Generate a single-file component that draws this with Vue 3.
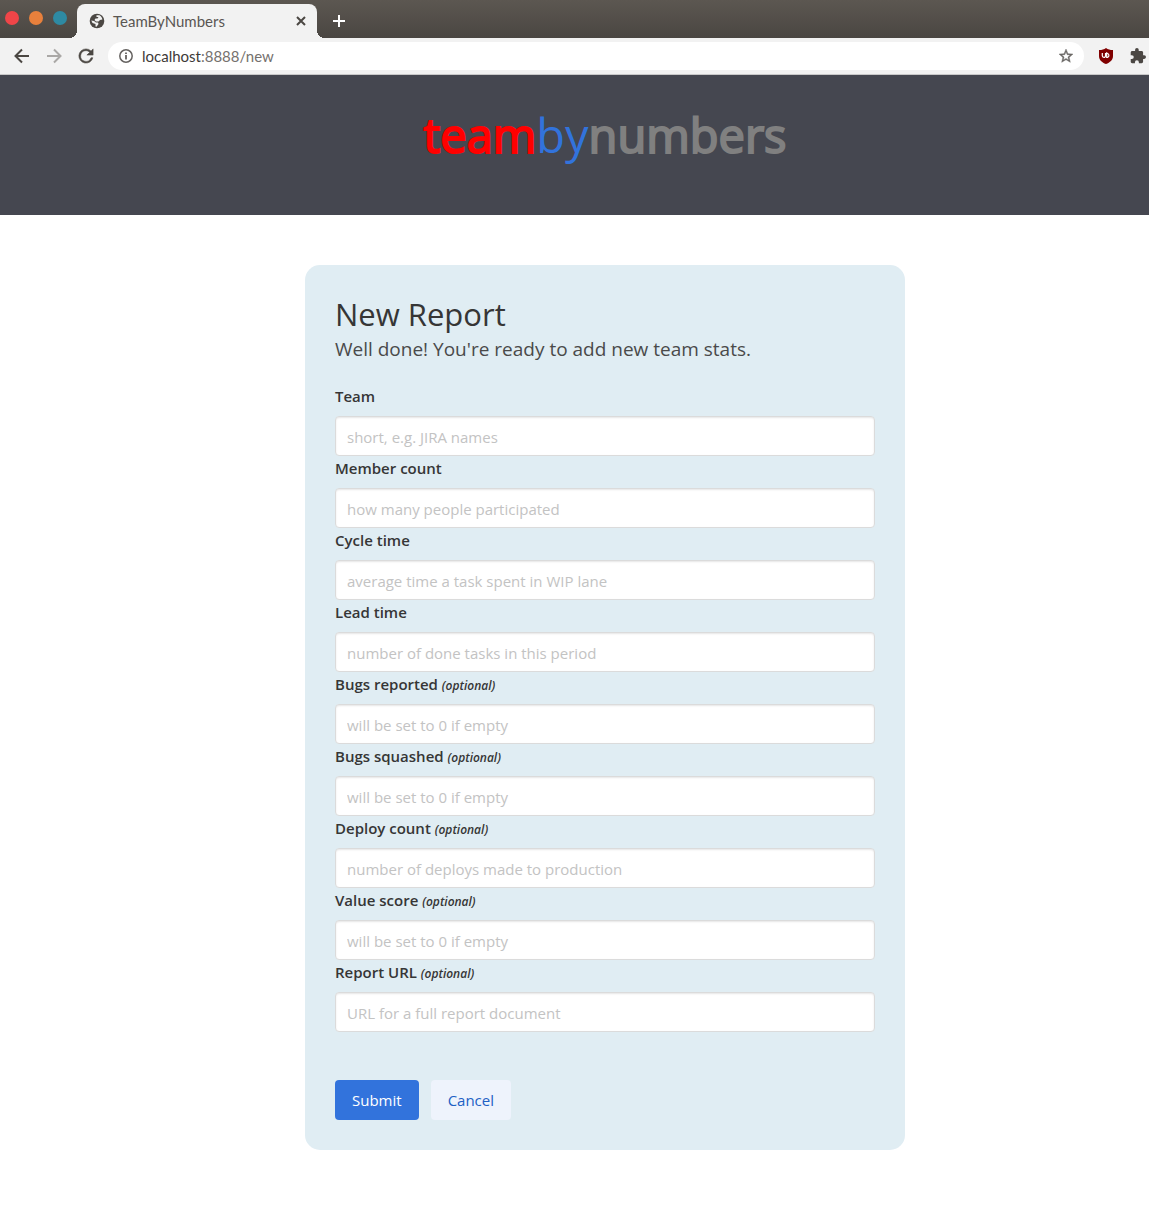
<script setup>
const fields = [
  { id: 'team', label: 'Team', placeholder: 'short, e.g. JIRA names' },
  { id: 'members', label: 'Member count', placeholder: 'how many people participated' },
  { id: 'cycle', label: 'Cycle time', placeholder: 'average time a task spent in WIP lane' },
  { id: 'lead', label: 'Lead time', placeholder: 'number of done tasks in this period' },
  { id: 'reported', label: 'Bugs reported', optional: true, placeholder: 'will be set to 0 if empty' },
  { id: 'squashed', label: 'Bugs squashed', optional: true, placeholder: 'will be set to 0 if empty' },
  { id: 'deploys', label: 'Deploy count', optional: true, placeholder: 'number of deploys made to production' },
  { id: 'score', label: 'Value score', optional: true, placeholder: 'will be set to 0 if empty' },
  { id: 'url', label: 'Report URL', optional: true, placeholder: 'URL for a full report document' },
]
</script>

<template>
  <div class="window">
    <header class="tabstrip">
      <div class="lights">
        <button class="light close" aria-label="Close window"></button>
        <button class="light minimise" aria-label="Minimise window"></button>
        <button class="light maximise" aria-label="Maximise window"></button>
      </div>
      <div class="tab">
        <svg viewBox="0 0 18 18" width="18" height="18">
          <circle cx="9" cy="9" r="7.300" fill="#4b4743" />
          <path fill="#f2f2f2" d="M8.500 3.300h3c1.500.900 2.500 2.300 2.900 4.200l-2.400.500-1.500 1.500H8L6.500 8l1-1.500h2L10.500 5h-2zM3.300 8.500l2.700.500 2 1.500h2l.5 1.500-2 2.700-1-.200V12L4.500 11z" />
        </svg>
        <span class="tab-title">TeamByNumbers</span>
        <button class="icon" aria-label="Close tab">
          <svg viewBox="0 0 10 10" width="10" height="10"><path d="M1 1l8 8M9 1L1 9" stroke="#4b4743" stroke-width="2" /></svg>
        </button>
      </div>
      <button class="icon new-tab" aria-label="New tab">
        <svg viewBox="0 0 12 12" width="12" height="12"><path d="M6 0v12M0 6h12" stroke="#fff" stroke-width="2" /></svg>
      </button>
    </header>

    <nav class="toolbar">
      <button class="icon" aria-label="Back">
        <svg viewBox="0 0 16 16" width="16" height="16"><path d="M15 8H2M8 1.500L1.500 8 8 14.500" fill="none" stroke="#4b4743" stroke-width="2" /></svg>
      </button>
      <button class="icon" aria-label="Forward">
        <svg viewBox="0 0 16 16" width="16" height="16"><path d="M1 8h13M8 1.500L14.500 8 8 14.500" fill="none" stroke="#aaa8a6" stroke-width="2" /></svg>
      </button>
      <button class="icon" aria-label="Reload">
        <svg viewBox="3 3 18 18" width="16" height="16"><path fill="#4b4743" stroke="#4b4743" stroke-width=".6" d="M17.650 6.350A7.960 7.960 0 0 0 12 4a8 8 0 1 0 7.730 10h-2.080A6 6 0 1 1 12 6c1.660 0 3.140.690 4.220 1.780L13 11h7V4z" /></svg>
      </button>
      <div class="address">
        <svg viewBox="0 0 14 14" width="14" height="14"><circle cx="7" cy="7" r="6.200" fill="none" stroke="#656260" stroke-width="1.500" /><path d="M7 6v4.500M7 3.500V5" stroke="#656260" stroke-width="1.800" /></svg>
        <span class="url"><span class="host">localhost</span>:8888/new</span>
        <button class="icon" aria-label="Bookmark this page">
          <svg viewBox="2 2 20 20" width="14" height="14"><path fill="#6b6866" stroke="#6b6866" stroke-width=".6" d="M22 9.240l-7.190-.620L12 2 9.190 8.630 2 9.240l5.460 4.730L5.820 21 12 17.270 18.180 21l-1.630-7.030L22 9.240zM12 15.400l-3.760 2.270 1-4.280-3.320-2.880 4.380-.380L12 6.100l1.710 4.040 4.380.380-3.320 2.880 1 4.280L12 15.400z" /></svg>
        </button>
      </div>
      <button class="icon" aria-label="uBlock Origin">
        <svg viewBox="-1 0 16 16" width="16" height="16">
          <path fill="#800000" d="M7 0c2 1.500 4 2 7 2v6c0 4-3 6.500-7 8-4-1.500-7-4-7-8V2c3 0 5-.500 7-2z" />
          <path d="M3.300 5v2.800c0 2 3.200 2 3.200 0V5M7.700 5v4.300h1a2.100 2.100 0 0 0 0-3.800z" fill="none" stroke="#fff" stroke-width="1.200" />
        </svg>
      </button>
      <button class="icon" aria-label="Extensions">
        <svg viewBox="1 1 22 22" width="16" height="16"><path fill="#4b4743" d="M20.500 11H19V7c0-1.100-.900-2-2-2h-4V3.500a2.500 2.500 0 0 0-5 0V5H4c-1.100 0-2 .900-2 2v3.800h1.500a2.700 2.700 0 0 1 0 5.400H2V20c0 1.100.900 2 2 2h3.800v-1.500a2.700 2.700 0 0 1 5.400 0V22H17c1.100 0 2-.900 2-2v-4h1.500a2.500 2.500 0 0 0 0-5z" /></svg>
      </button>
    </nav>

    <div class="banner">
      <div class="brand"><b class="team">team</b><span class="by">by</span><b class="numbers">numbers</b></div>
    </div>

    <main>
      <form class="card" @submit.prevent>
        <h1>New Report</h1>
        <p class="subtitle">Well done! You're ready to add new team stats.</p>
        <div v-for="f in fields" :key="f.id" class="field">
          <label :for="f.id">{{ f.label }} <i v-if="f.optional">(optional)</i></label>
          <input :id="f.id" type="text" :placeholder="f.placeholder" />
        </div>
        <div class="actions">
          <button type="submit" class="btn submit">Submit</button>
          <button type="button" class="btn cancel">Cancel</button>
        </div>
      </form>
    </main>
  </div>
</template>

<style>
body {
  margin: 0;
  background: #fff;
}
</style>

<style scoped>
.window {
  font-family: "Open Sans", "Noto Sans", sans-serif;
  font-size: 15px;
  color: #363636;
  overflow-x: hidden;
}
.window * {
  box-sizing: border-box;
}
button {
  font: inherit;
  border: 0;
  padding: 0;
}
svg {
  display: block;
  flex: none;
}
.icon {
  background: none;
  flex: none;
}
.tabstrip {
  display: flex;
  align-items: flex-end;
  height: 38px;
  padding-left: 5px;
  background: linear-gradient(#5c5751, #4a4642);
}
.lights {
  display: flex;
  gap: 10px;
  width: 72px;
  padding-bottom: 13px;
}
.light {
  width: 14px;
  height: 14px;
  border-radius: 50%;
}
.close { background: #f04548; }
.minimise { background: #e8803c; }
.maximise { background: #2e8aa3; }
.tab {
  position: relative;
  display: flex;
  align-items: center;
  width: 240px;
  height: 34px;
  padding: 0 11px;
  border-radius: 8px 8px 0 0;
  background: #f2f2f2;
}
.tab::before,
.tab::after {
  content: "";
  position: absolute;
  bottom: 0;
  width: 8px;
  height: 8px;
}
.tab::before {
  right: 100%;
  background: radial-gradient(circle at 0 0, transparent 8px, #f2f2f2 8px);
}
.tab::after {
  left: 100%;
  background: radial-gradient(circle at 100% 0, transparent 8px, #f2f2f2 8px);
}
.tab-title,
.url {
  flex: 1;
  font-family: Lato, sans-serif;
  font-size: 15px;
  line-height: 20px;
}
.tab-title {
  padding-left: 7px;
  color: #5a5653;
}
.new-tab {
  padding: 0 0 11px 16px;
}
.toolbar {
  display: flex;
  align-items: center;
  gap: 16px;
  height: 37px;
  padding: 0 3px 0 14px;
  border-bottom: 1px solid #c9c9c9;
  background: #f2f2f2;
}
.address {
  display: flex;
  align-items: center;
  flex: 1;
  height: 28px;
  margin: 0 -2px;
  padding: 0 11px;
  border-radius: 14px;
  background: #fff;
}
.url {
  padding-left: 9px;
  color: #75716e;
}
.host {
  color: #3d3a38;
}
.banner {
  display: flex;
  justify-content: center;
  height: 140px;
  padding: 24px 0 0 61px;
  background: #454750;
}
.brand {
  font-size: 47px;
  line-height: 72px;
}
.brand b {
  font-weight: 400;
  -webkit-text-stroke: 2px currentColor;
}
.team { color: #f00; }
.by { color: #3273dc; }
.numbers { color: #808080; }
main {
  display: flex;
  justify-content: center;
  padding: 50px 0 77px 61px;
}
.card {
  width: 600px;
  padding: 30px;
  border-radius: 15px;
  background: #e0edf3;
}
h1 {
  margin: 0 0 2px;
  font-size: 31px;
  font-weight: 400;
  line-height: 38px;
}
.subtitle {
  margin: 0 0 21px;
  font-size: 19px;
  line-height: 28px;
  color: #4a4a4a;
}
.field {
  display: flex;
  flex-direction: column;
}
label {
  height: 32px;
  line-height: 24px;
  font-weight: 600;
}
label i {
  font-size: 12px;
}
input {
  height: 40px;
  padding: 2px 11px 0;
  border: 1px solid #dbdbdb;
  border-radius: 4px;
  background: #fff;
  box-shadow: inset 0 1px 2px rgba(10, 10, 10, 0.1);
  font: inherit;
}
input::placeholder {
  color: #c3c3c3;
  opacity: 1;
}
.actions {
  display: flex;
  gap: 12px;
  margin-top: 48px;
}
.btn {
  height: 40px;
  padding: 0 17px;
  border-radius: 4px;
}
.submit {
  background: #3273dc;
  color: #fff;
}
.cancel {
  background: #eef3fc;
  color: #2160c4;
}
</style>
